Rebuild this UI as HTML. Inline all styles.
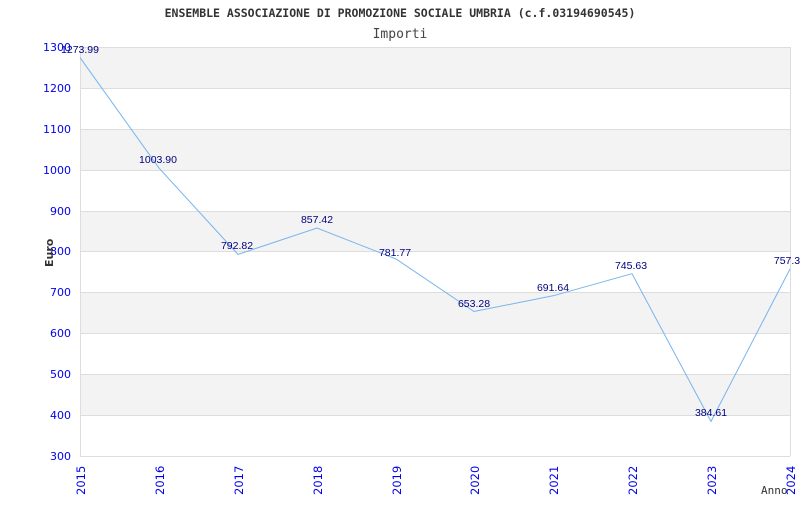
<!DOCTYPE html>
<html><head><meta charset="utf-8"><style>
body{margin:0;background:#fff;width:800px;height:500px;overflow:hidden}
</style></head><body>
<svg width="800" height="500" xmlns="http://www.w3.org/2000/svg" font-family="DejaVu Sans, sans-serif">
<text x="400" y="17" text-anchor="middle" font-family="DejaVu Sans Mono, monospace" font-size="11.5" font-weight="bold" fill="#333">ENSEMBLE ASSOCIAZIONE DI PROMOZIONE SOCIALE UMBRIA (c.f.03194690545)</text>
<text x="400" y="38" text-anchor="middle" font-size="13" fill="#444" font-family="DejaVu Sans Mono, monospace">Importi</text>
<g fill="#f3f3f3">
<rect x="80" y="47" width="710" height="41"/><rect x="80" y="129" width="710" height="41"/><rect x="80" y="211" width="710" height="40"/><rect x="80" y="292" width="710" height="41"/><rect x="80" y="374" width="710" height="41"/>
</g>
<g stroke="#dddddd" stroke-width="1">
<line x1="80" x2="790" y1="47.5" y2="47.5"/><line x1="80" x2="790" y1="88.5" y2="88.5"/><line x1="80" x2="790" y1="129.5" y2="129.5"/><line x1="80" x2="790" y1="170.5" y2="170.5"/><line x1="80" x2="790" y1="211.5" y2="211.5"/><line x1="80" x2="790" y1="251.5" y2="251.5"/><line x1="80" x2="790" y1="292.5" y2="292.5"/><line x1="80" x2="790" y1="333.5" y2="333.5"/><line x1="80" x2="790" y1="374.5" y2="374.5"/><line x1="80" x2="790" y1="415.5" y2="415.5"/><line x1="80" x2="790" y1="456.5" y2="456.5"/>
<line x1="80.5" x2="80.5" y1="47" y2="456"/><line x1="790.5" x2="790.5" y1="47" y2="456"/>
</g>
<g fill="#0000ee" font-size="11" text-anchor="end">
<text x="71" y="51">1300</text><text x="71" y="92">1200</text><text x="71" y="133">1100</text><text x="71" y="174">1000</text><text x="71" y="215">900</text><text x="71" y="255">800</text><text x="71" y="296">700</text><text x="71" y="337">600</text><text x="71" y="378">500</text><text x="71" y="419">400</text><text x="71" y="460">300</text>
</g>
<g fill="#0000ee" font-size="11.5">
<text transform="translate(85,495) rotate(-90)">2015</text>
<text transform="translate(164,495) rotate(-90)">2016</text>
<text transform="translate(243,495) rotate(-90)">2017</text>
<text transform="translate(322,495) rotate(-90)">2018</text>
<text transform="translate(401,495) rotate(-90)">2019</text>
<text transform="translate(479,495) rotate(-90)">2020</text>
<text transform="translate(558,495) rotate(-90)">2021</text>
<text transform="translate(637,495) rotate(-90)">2022</text>
<text transform="translate(716,495) rotate(-90)">2023</text>
<text transform="translate(795,495) rotate(-90)">2024</text>
</g>
<text transform="translate(53,267) rotate(-90)" font-size="11" font-weight="bold" fill="#333">Euro</text>
<text x="761" y="494" font-size="11" fill="#333" font-family="DejaVu Sans Mono, monospace">Anno</text>
<polyline fill="none" stroke="#77b5ee" stroke-width="1" points="80,57.6 159,168.1 238,254.4 317,228 396,259 474,311.5 553,295.8 632,273.7 711,421.4 790,269"/>
<g fill="#000080" font-size="10.5" text-anchor="middle" font-family="Liberation Sans, sans-serif">
<text x="80" y="53">1273.99</text><text x="158" y="163">1003.90</text><text x="237" y="249">792.82</text><text x="317" y="223">857.42</text><text x="395" y="256">781.77</text><text x="474" y="307">653.28</text><text x="553" y="291">691.64</text><text x="631" y="269">745.63</text><text x="711" y="416">384.61</text><text x="787" y="264">757.3</text>
</g>
</svg>
</body></html>
